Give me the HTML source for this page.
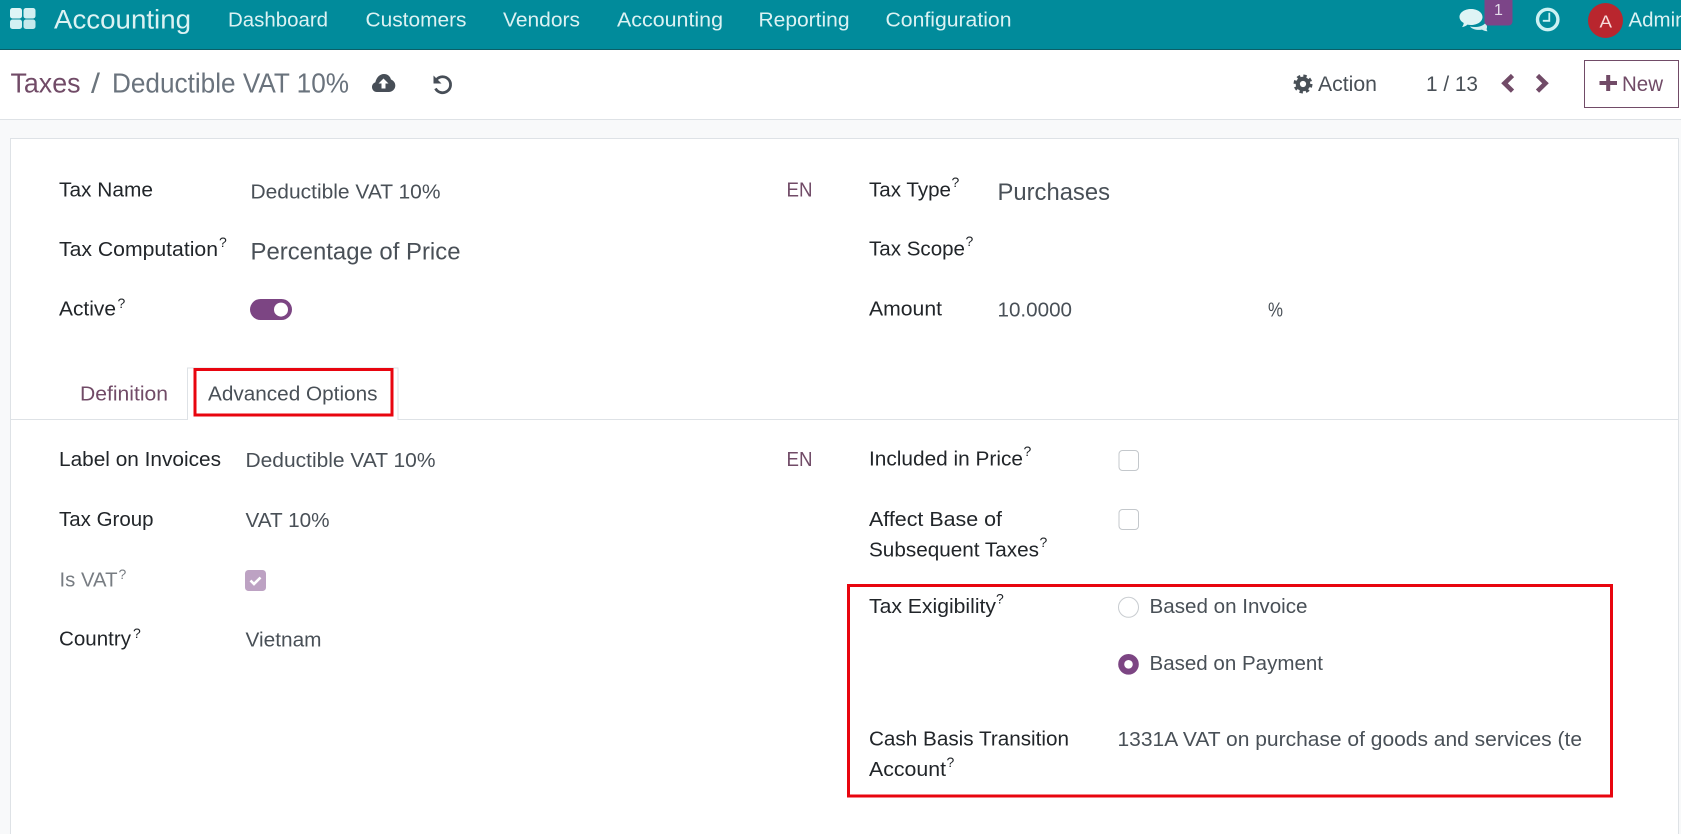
<!DOCTYPE html>
<html>
<head>
<meta charset="utf-8">
<title>Taxes / Deductible VAT 10%</title>
<style>
html,body{margin:0;padding:0;width:1681px;height:834px;overflow:hidden;background:#fff}
svg{display:block}
text{font-family:"Liberation Sans",sans-serif;font-size:20.5px}
.l{fill:#212529}
.v{fill:#495057;font-size:20px}
.n{fill:#dcf2f3}
.q{font-size:14px;fill:#212529}
.p{fill:#714b67}
</style>
</head>
<body>
<svg width="1681" height="834" viewBox="0 0 1681 834" xmlns="http://www.w3.org/2000/svg">
<!-- backgrounds -->
<rect width="1681" height="834" fill="#f8f9fa"/>
<rect y="0" width="1681" height="49" fill="#018b9b"/>
<rect y="49" width="1681" height="1" fill="#0b5f68"/>
<rect y="50" width="1681" height="69" fill="#fff"/>
<rect y="119" width="1681" height="1" fill="#dee2e6"/>
<rect x="10.500" y="138.500" width="1668" height="700" fill="#fff" stroke="#dee2e6"/>

<!-- navbar -->
<rect x="10" y="8" width="12" height="10.500" rx="2.500" fill="#dff5f6"/>
<rect x="23.500" y="8" width="12" height="10.500" rx="2.500" fill="#d3eff1"/>
<rect x="10" y="19.500" width="12" height="9.500" rx="2.500" fill="#d3f1f3"/>
<rect x="23.500" y="19.500" width="12" height="9.500" rx="2.500" fill="#c6e9ec"/>
<text x="54" y="28.500" class="n" style="font-size:27px" textLength="137" lengthAdjust="spacingAndGlyphs">Accounting</text>
<text x="228" y="26.700" class="n" textLength="100" lengthAdjust="spacingAndGlyphs">Dashboard</text>
<text x="365.500" y="26.700" class="n" textLength="101" lengthAdjust="spacingAndGlyphs">Customers</text>
<text x="503" y="26.700" class="n" textLength="77" lengthAdjust="spacingAndGlyphs">Vendors</text>
<text x="617" y="26.700" class="n" textLength="106" lengthAdjust="spacingAndGlyphs">Accounting</text>
<text x="758.500" y="26.700" class="n" textLength="91" lengthAdjust="spacingAndGlyphs">Reporting</text>
<text x="885.500" y="26.700" class="n" textLength="126" lengthAdjust="spacingAndGlyphs">Configuration</text>

<!-- chat icon -->
<path d="M1470 26.500c5 1.200 11.500.5 15-3 1.800 1.500 2.500 3 1.800 4.800-.5 1 .2 2 .7 3-2.200-.2-4-.7-5.500-1.700-3.500.8-9.500.3-12-3.100z" fill="#d2eff1"/>
<path d="M1471 9c6.500 0 11.500 3.500 11.500 8s-5 8-11.500 8c-1.300 0-2.500-.1-3.600-.4-1.500 1.400-3.200 2.200-5.400 2.500 1-1.200 1.600-2.500 1.700-4.100-2.600-1.500-4.200-3.600-4.200-6 0-4.500 5-8 11.500-8z" fill="#dff4f5"/>
<!-- badge -->
<path d="M1484.500 0h28v21.500a4 4 0 0 1-4 4h-20a4 4 0 0 1-4-4z" fill="#7c4588"/>
<text x="1494" y="15" style="font-size:16px" fill="#e4dcea">1</text>
<!-- clock -->
<circle cx="1547.700" cy="19.500" r="10.200" fill="none" stroke="#cdf1f3" stroke-width="3.400"/>
<path d="M1549.300 12.800v8h-6.500" fill="none" stroke="#cdf1f3" stroke-width="1.800"/>
<!-- avatar -->
<circle cx="1605.500" cy="20.500" r="17.500" fill="#b9262e"/>
<text x="1599.500" y="27.500" style="font-size:17.500px" fill="#f8dcdc" textLength="12.500" lengthAdjust="spacingAndGlyphs">A</text>
<text x="1628.500" y="26.700" class="n" textLength="58" lengthAdjust="spacingAndGlyphs">Admin</text>

<!-- breadcrumb -->
<text x="10.500" y="92.300" class="p" style="font-size:28px" textLength="70" lengthAdjust="spacingAndGlyphs">Taxes</text>
<text x="91" y="92.300" style="font-size:28px" fill="#6c757d" textLength="9" lengthAdjust="spacingAndGlyphs">/</text>
<text x="112" y="92.300" style="font-size:28px" fill="#6a737d" textLength="237" lengthAdjust="spacingAndGlyphs">Deductible VAT 10%</text>
<!-- cloud upload -->
<path d="M384 74c3.500 0 6.200 2.300 7 5.500 2.500 1 4.300 3.200 4.300 6 0 3.700-3 6.500-6.500 6.500h-12c-2.800 0-4.800-2.300-4.800-5 0-2.300 1.400-4.100 3.400-4.800 1-4.600 4.200-8.200 8.600-8.200z" fill="#474e57"/>
<path d="M383.500 78.500l5 5h-3v5h-4v-5h-3z" fill="#fff"/>
<!-- undo -->
<path d="M436.500 79.500a8 8 0 1 1-1 9" fill="none" stroke="#474e57" stroke-width="2.800"/>
<path d="M433.500 75.500v8h8z" fill="#474e57"/>

<!-- action -->
<circle cx="1303" cy="84" r="5.200" fill="none" stroke="#495057" stroke-width="4.200"/>
<circle cx="1303" cy="84" r="8" fill="none" stroke="#495057" stroke-width="3" stroke-dasharray="3.300 3"/>
<text x="1318" y="91" class="v" style="font-size:21px" textLength="59" lengthAdjust="spacingAndGlyphs">Action</text>
<text x="1426" y="91" class="v" style="font-size:21px" textLength="52" lengthAdjust="spacingAndGlyphs">1 / 13</text>
<path d="M1512.500 75.500l-8 7.800 8 7.800" fill="none" stroke="#714b67" stroke-width="4.600"/>
<path d="M1537.500 75.500l8 7.800-8 7.800" fill="none" stroke="#714b67" stroke-width="4.600"/>
<rect x="1584.500" y="60.500" width="94" height="47" fill="#fff" stroke="#714b67"/>
<path d="M1599.500 83h17.500M1608.200 75v16" fill="none" stroke="#714b67" stroke-width="4"/>
<text x="1622" y="91" class="p" style="font-size:21px" textLength="41" lengthAdjust="spacingAndGlyphs">New</text>

<!-- top form left -->
<text x="59" y="196.700" class="l" textLength="94" lengthAdjust="spacingAndGlyphs">Tax Name</text>
<text x="250.500" y="198.300" class="v" textLength="190" lengthAdjust="spacingAndGlyphs">Deductible VAT 10%</text>
<text x="59" y="256" class="l" textLength="159" lengthAdjust="spacingAndGlyphs">Tax Computation</text>
<text x="219" y="247" class="q">?</text>
<text x="250.500" y="259.300" class="v" style="font-size:24.500px" textLength="210" lengthAdjust="spacingAndGlyphs">Percentage of Price</text>
<text x="59" y="315.300" class="l" textLength="57" lengthAdjust="spacingAndGlyphs">Active</text>
<text x="117.500" y="308" class="q">?</text>
<rect x="250" y="299" width="42" height="21" rx="10.500" fill="#7c4583"/>
<circle cx="281" cy="309.600" r="7" fill="#fff"/>

<!-- top form right -->
<text x="786.500" y="196.700" class="p" textLength="26" lengthAdjust="spacingAndGlyphs">EN</text>
<text x="869" y="196.700" class="l" textLength="82" lengthAdjust="spacingAndGlyphs">Tax Type</text>
<text x="951.500" y="187" class="q">?</text>
<text x="997.500" y="200" class="v" style="font-size:24.500px" textLength="112.500" lengthAdjust="spacingAndGlyphs">Purchases</text>
<text x="869" y="255.700" class="l" textLength="96" lengthAdjust="spacingAndGlyphs">Tax Scope</text>
<text x="965.500" y="246" class="q">?</text>
<text x="869" y="315.700" class="l" textLength="73" lengthAdjust="spacingAndGlyphs">Amount</text>
<text x="997.500" y="316.700" class="v" textLength="74.500" lengthAdjust="spacingAndGlyphs">10.0000</text>
<text x="1268" y="316.700" class="v" textLength="15" lengthAdjust="spacingAndGlyphs">%</text>

<!-- tabs -->
<rect x="10.500" y="419" width="1668" height="1" fill="#dee2e6"/>
<path d="M187.500 420v-52h210.500v52" fill="#fff" stroke="#dee2e6"/>
<text x="80" y="400.700" class="p" textLength="88" lengthAdjust="spacingAndGlyphs">Definition</text>
<text x="208" y="400.700" class="v" style="font-size:20.500px" textLength="169.500" lengthAdjust="spacingAndGlyphs">Advanced Options</text>
<rect x="195" y="369.500" width="197" height="45.500" fill="none" stroke="#e8050f" stroke-width="3"/>

<!-- lower left -->
<text x="59" y="466" class="l" textLength="162" lengthAdjust="spacingAndGlyphs">Label on Invoices</text>
<text x="245.500" y="467" class="v" textLength="190" lengthAdjust="spacingAndGlyphs">Deductible VAT 10%</text>
<text x="59" y="526" class="l" textLength="94.500" lengthAdjust="spacingAndGlyphs">Tax Group</text>
<text x="245.500" y="527" class="v" textLength="84" lengthAdjust="spacingAndGlyphs">VAT 10%</text>
<text x="59.500" y="586.700" fill="#777c82" textLength="58" lengthAdjust="spacingAndGlyphs">Is VAT</text>
<text x="118.500" y="579" class="q" style="fill:#777c82">?</text>
<rect x="245" y="570" width="21" height="21" rx="3.500" fill="#bda2c3"/>
<path d="M250.500 580.500l3.500 3.500 6.500-6.500" fill="none" stroke="#fff" stroke-width="2.600"/>
<text x="59" y="645.700" class="l" textLength="72" lengthAdjust="spacingAndGlyphs">Country</text>
<text x="133" y="638" class="q">?</text>
<text x="245.500" y="646.700" class="v" textLength="76" lengthAdjust="spacingAndGlyphs">Vietnam</text>

<!-- lower right -->
<text x="786.500" y="466" class="p" textLength="26" lengthAdjust="spacingAndGlyphs">EN</text>
<text x="869" y="465.700" class="l" textLength="154" lengthAdjust="spacingAndGlyphs">Included in Price</text>
<text x="1023.500" y="456" class="q">?</text>
<rect x="1119" y="450.500" width="19.500" height="20" rx="3.500" fill="#fff" stroke="#c4c8cc"/>
<text x="869" y="526" class="l" textLength="133" lengthAdjust="spacingAndGlyphs">Affect Base of</text>
<rect x="1119" y="509.500" width="19.500" height="20" rx="3.500" fill="#fff" stroke="#c4c8cc"/>
<text x="869" y="556.700" class="l" textLength="170" lengthAdjust="spacingAndGlyphs">Subsequent Taxes</text>
<text x="1039.500" y="547" class="q">?</text>

<text x="869" y="613" class="l" textLength="127" lengthAdjust="spacingAndGlyphs">Tax Exigibility</text>
<text x="996" y="603.500" class="q">?</text>
<circle cx="1128.500" cy="607.300" r="10" fill="#fff" stroke="#c8ccd0"/>
<text x="1149.500" y="613" class="v" style="font-size:20.500px" textLength="158" lengthAdjust="spacingAndGlyphs">Based on Invoice</text>
<circle cx="1128.500" cy="664.300" r="7.300" fill="#fff" stroke="#7c4583" stroke-width="6"/>
<text x="1149.500" y="670" class="v" style="font-size:20.500px" textLength="173.500" lengthAdjust="spacingAndGlyphs">Based on Payment</text>
<text x="869" y="745.300" class="l" textLength="200" lengthAdjust="spacingAndGlyphs">Cash Basis Transition</text>
<text x="1117.500" y="746" class="v" textLength="464.500" lengthAdjust="spacingAndGlyphs">1331A VAT on purchase of goods and services (te</text>
<text x="869" y="776" class="l" textLength="77" lengthAdjust="spacingAndGlyphs">Account</text>
<text x="946.500" y="767" class="q">?</text>
<rect x="848.500" y="585.500" width="763" height="210.500" fill="none" stroke="#e8050f" stroke-width="3"/>
</svg>
</body>
</html>
